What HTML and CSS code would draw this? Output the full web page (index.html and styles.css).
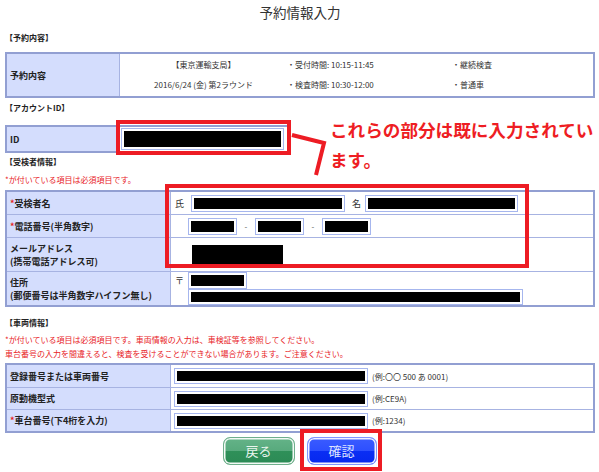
FILE: index.html
```html
<!DOCTYPE html>
<html lang="ja">
<head>
<meta charset="utf-8">
<title>予約情報入力</title>
<link rel="stylesheet" href="styles.css">
</head>
<body>
<div class="page">
  <h1 class="title">予約情報入力</h1>

  <div class="sec sec-res">【予約内容】</div>
  <table class="tbl t-res">
    <tr class="h-res">
      <th class="lbl lbl-s">予約内容</th>
      <td class="res-cell">
        <div class="res-grid">
          <span class="c-a">【東京運輸支局】</span>
          <span>・受付時間: 10:15-11:45</span>
          <span>・継続検査</span>
          <span class="c-a">2016/6/24 (金) 第2ラウンド</span>
          <span>・検査時間: 10:30-12:00</span>
          <span>・普通車</span>
        </div>
      </td>
    </tr>
  </table>

  <div class="sec sec-acc">【アカウントID】</div>
  <table class="tbl t-id">
    <tr class="h-id">
      <th class="lbl lbl-s">ID</th>
      <td class="v-id"><span class="field"><span class="mask m-id"></span></span></td>
    </tr>
  </table>

  <div class="sec sec-exam">【受検者情報】</div>
  <div class="note note-exam">*が付いている項目は必須項目です。</div>
  <table class="tbl t-wide">
    <tr class="h-22">
      <th class="lbl lbl-w"><span class="req">*</span>受検者名</th>
      <td class="v-row">
        <span class="pre">氏</span><span class="field"><span class="mask m-sei"></span></span><span class="pre pre-mei">名</span><span class="field"><span class="mask m-mei"></span></span>
      </td>
    </tr>
    <tr class="h-23">
      <th class="lbl lbl-w"><span class="req">*</span>電話番号(半角数字)</th>
      <td class="v-row v-tel">
        <span class="field"><span class="mask m-tel"></span></span><span class="dash">-</span><span class="field"><span class="mask m-tel"></span></span><span class="dash">-</span><span class="field"><span class="mask m-tel"></span></span>
      </td>
    </tr>
    <tr class="h-34">
      <th class="lbl lbl-w lbl-2">メールアドレス<br>(携帯電話アドレス可)</th>
      <td class="v-row v-mail"><span class="mask m-mail"></span></td>
    </tr>
    <tr class="h-34">
      <th class="lbl lbl-w lbl-2">住所<br>(郵便番号は半角数字ハイフン無し)</th>
      <td class="v-addr">
        <div class="addr-line"><span class="pre">〒</span><span class="field"><span class="mask m-zip"></span></span></div>
        <div class="addr-line addr-2"><span class="field"><span class="mask m-addr"></span></span></div>
      </td>
    </tr>
  </table>

  <div class="sec sec-car">【車両情報】</div>
  <div class="note note-car">*が付いている項目は必須項目です。車両情報の入力は、車検証等を参照してください。<br>車台番号の入力を間違えると、検査を受けることができない場合があります。ご注意ください。</div>
  <table class="tbl t-wide">
    <tr class="h-car">
      <th class="lbl lbl-w">登録番号または車両番号</th>
      <td class="v-row v-car"><span class="field"><span class="mask m-car"></span></span><span class="ex">(例:〇〇 500 あ 0001)</span></td>
    </tr>
    <tr class="h-car">
      <th class="lbl lbl-w">原動機型式</th>
      <td class="v-row v-car"><span class="field"><span class="mask m-car"></span></span><span class="ex">(例:CE9A)</span></td>
    </tr>
    <tr class="h-car">
      <th class="lbl lbl-w"><span class="req">*</span>車台番号(下4桁を入力)</th>
      <td class="v-row v-car"><span class="field"><span class="mask m-car"></span></span><span class="ex">(例:1234)</span></td>
    </tr>
  </table>

  <div class="actions">
    <button class="btn btn-back" type="button">戻る</button>
    <button class="btn btn-ok" type="button">確認</button>
  </div>

  <div class="hl hl-id"></div>
  <div class="hl hl-exam"></div>
  <div class="hl hl-ok"></div>
  <svg class="connector" width="44" height="52" viewBox="0 0 44 52"><polyline points="4,5 36,13 28,45" fill="none" stroke="#ed1c24" stroke-width="4"/></svg>
  <p class="callout">これらの部分は既に入力されてい<br>ます。</p>
</div>
</body>
</html>
```

FILE: styles.css
```css
* { box-sizing: border-box; }

body {
  margin: 0;
  background: #fff;
  font-family: "Noto Sans CJK JP", "Noto Sans", sans-serif;
  color: #222;
}

.page {
  position: relative;
  width: 599px;
  height: 472px;
  padding: 0 4px 0 5px;
  overflow: hidden;
}

.title {
  margin: 0;
  height: 26px;
  line-height: 24px;
  font-size: 13.5px;
  font-weight: normal;
  text-align: center;
  color: #333;
}

.sec {
  height: 12px;
  line-height: 12px;
  font-size: 8px;
  font-weight: bold;
  color: #222;
}
.sec-res { margin: 6px 0 8px; }
.sec-acc { margin: 4px 0 11px; }
.sec-exam { margin: 3px 0 0; }
.sec-car { margin: 10px 0 0; }

.note {
  color: #e8231f;
  font-size: 8px;
}
.note-exam { margin: 6px 0 4px; line-height: 12px; }
.note-car { margin: 4px 0 2px; line-height: 14px; }

.req { color: #e8231f; }

/* tables */
.tbl {
  border-collapse: separate;
  border-spacing: 0;
  table-layout: fixed;
  border: 2px solid #929fd2;
  background: #fff;
}
.tbl th, .tbl td {
  padding: 0;
  font-size: 8px;
  font-weight: normal;
  vertical-align: middle;
}
.tbl td { border-left: 1px solid #a7b3e2; }
.tbl tr + tr > th, .tbl tr + tr > td { border-top: 1px solid #a7b3e2; }

.t-res { width: 590px; }
.t-id { width: 284px; }
.t-wide { width: 590px; }

.lbl {
  background: #d4ddfd;
  text-align: left;
  font-weight: bold !important;
  font-size: 9px !important;
  padding-left: 3px !important;
  color: #222;
  line-height: 13px;
}
.lbl-s { width: 112px; }
.lbl-w { width: 163px; }

.h-res { height: 42px; }
.h-id { height: 24px; }
.h-22 { height: 22px; }
.h-23 { height: 23px; }
.h-34 { height: 34px; }
.h-car { height: 22px; }

.res-cell { vertical-align: top !important; }
.res-grid {
  display: grid;
  grid-template-columns: 167px 165px 1fr;
  grid-auto-rows: 20px;
  align-items: center;
  color: #333;
  font-size: 8px;
}
.c-a { text-align: center; }

/* inputs */
.field {
  display: inline-block;
  border: 1px solid #a6b6ee;
  padding: 2px;
  background: #fff;
  vertical-align: middle;
  line-height: 0;
}
.mask {
  display: inline-block;
  background: #000;
  height: 11px;
  vertical-align: middle;
}
.m-id { width: 157px; height: 16px; }
.m-sei { width: 148px; }
.m-mei { width: 147px; }
.m-tel { width: 43px; }
.m-mail { width: 91px; height: 19px; }
.m-zip { width: 53px; }
.m-addr { width: 329px; height: 10px; }
.m-car { width: 188px; height: 10px; }

.v-id { padding-left: 1px !important; }

.v-row {
  white-space: nowrap;
  padding-left: 4px !important;
  font-size: 9px;
  color: #333;
}
.pre {
  display: inline-block;
  width: 8px;
  font-size: 9px;
  color: #333;
  vertical-align: middle;
  margin-right: 8px;
}
.pre-mei { margin-left: 7px; margin-right: 5px; }

.v-tel { padding-left: 17px !important; }
.dash {
  display: inline-block;
  width: 18px;
  text-align: center;
  vertical-align: middle;
  color: #555;
  font-size: 8px;
}
.v-mail { padding-left: 21px !important; }

.v-addr { padding-left: 4px !important; vertical-align: top !important; }
.addr-line {
  display: flex;
  align-items: center;
  height: 17px;
}
.addr-line .pre { margin-right: 5px; }
.addr-2 { padding-left: 13px; height: 16px; }

.v-car { padding-left: 3px !important; }
.ex {
  display: inline-block;
  margin-left: 4px;
  vertical-align: middle;
  font-size: 8px;
  color: #333;
}

/* buttons */
.actions {
  display: flex;
  justify-content: center;
  gap: 12px;
  margin-top: 4px;
  padding-right: 1px;
}
.btn {
  height: 28px;
  border-radius: 7px;
  padding: 0;
  font-family: inherit;
  font-size: 13px;
  line-height: 26px;
  cursor: pointer;
}
.btn-back {
  width: 72px;
  border: 1px solid #6faf8b;
  box-shadow: inset 0 0 0 1.5px #f4faf6;
  background: linear-gradient(to bottom, #64b388 0%, #58aa7d 50%, #2f9059 50%, #2c8a55 100%);
  color: #e9f5ee;
}
.btn-ok {
  width: 70px;
  border: 1px solid #7f95ff;
  box-shadow: inset 0 0 0 1.5px #f2f4ff;
  background: linear-gradient(to bottom, #3b5cff 0%, #2d4fff 50%, #0a2ef4 50%, #0628ee 100%);
  color: #dfe4ff;
}

/* annotation overlays */
.hl {
  position: absolute;
  border: 4px solid #ed1c24;
}
.hl-id { left: 116px; top: 120px; width: 175px; height: 35px; }
.hl-exam { left: 165px; top: 184px; width: 364px; height: 84px; }
.hl-ok { left: 300px; top: 429px; width: 82px; height: 42px; }

.connector {
  position: absolute;
  left: 288px;
  top: 130px;
}

.callout {
  position: absolute;
  left: 330px;
  top: 115px;
  margin: 0;
  font-size: 17.6px;
  line-height: 30px;
  font-weight: bold;
  color: #ee1d23;
  white-space: nowrap;
}
```
